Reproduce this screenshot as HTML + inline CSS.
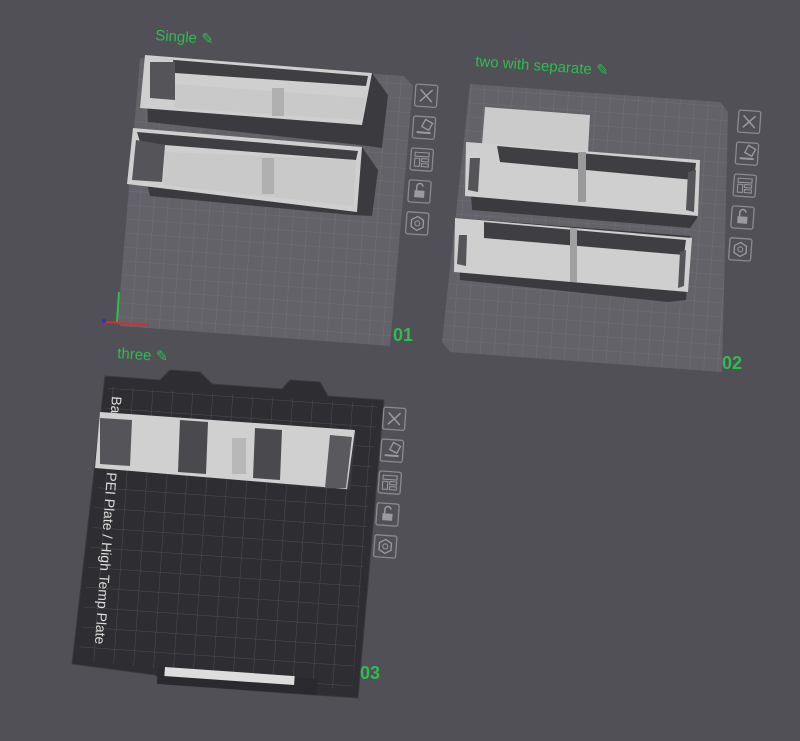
<!DOCTYPE html>
<html><head><meta charset="utf-8"><style>
html,body{margin:0;padding:0;background:#505056;width:800px;height:741px;overflow:hidden}
svg{display:block}
text{font-family:"Liberation Sans",sans-serif}
</style></head><body>
<svg width="800" height="741" viewBox="0 0 800 741" xmlns="http://www.w3.org/2000/svg">
<defs>
<pattern id="g1" width="14" height="14" patternUnits="userSpaceOnUse" patternTransform="rotate(4)">
<path d="M14 0V14M0 14H14" stroke="#737379" stroke-width="0.8" fill="none"/></pattern>
<pattern id="g3" width="20" height="20" patternUnits="userSpaceOnUse" patternTransform="rotate(4)">
<path d="M20 0V20M0 20H20" stroke="#4c4c52" stroke-width="1" fill="none"/></pattern>
<g id="icons">
<rect x="0" y="0" width="22" height="22" rx="2" fill="none" stroke="#8a8a90" stroke-width="1.3"/>
<path d="M5 5L17 17M17 5L5 17" stroke="#9a9aa0" stroke-width="1.5"/>
<rect x="0" y="32" width="22" height="22" rx="2" fill="none" stroke="#8a8a90" stroke-width="1.3"/>
<rect x="10" y="36" width="8" height="8" transform="rotate(25 14 40)" fill="none" stroke="#9a9aa0" stroke-width="1.3"/>
<path d="M4 48H18" stroke="#9a9aa0" stroke-width="2"/>
<rect x="0" y="64" width="22" height="22" rx="2" fill="none" stroke="#8a8a90" stroke-width="1.3"/>
<rect x="4" y="68" width="14" height="4" fill="none" stroke="#9a9aa0"/><rect x="4" y="74" width="5" height="8" fill="none" stroke="#9a9aa0"/><rect x="11" y="74" width="7" height="3" fill="none" stroke="#9a9aa0"/><rect x="11" y="79" width="7" height="3" fill="none" stroke="#9a9aa0"/>
<rect x="0" y="96" width="22" height="22" rx="2" fill="none" stroke="#8a8a90" stroke-width="1.3"/>
<path d="M8 106V102a3 3 0 0 1 6 0" fill="none" stroke="#9a9aa0" stroke-width="1.5"/><rect x="6" y="106" width="10" height="7" fill="#9a9aa0"/>
<rect x="0" y="128" width="22" height="22" rx="2" fill="none" stroke="#8a8a90" stroke-width="1.3"/>
<polygon points="11,132 17,135.5 17,142.5 11,146 5,142.5 5,135.5" fill="none" stroke="#9a9aa0" stroke-width="1.3"/><circle cx="11" cy="139" r="2.5" fill="none" stroke="#9a9aa0"/>
</g>
</defs>

<!-- plate 1 -->
<polygon points="140,58 404,76 413,86 390,346 120,326 118,318" fill="#626268"/>
<polygon points="140,58 404,76 413,86 390,346 120,326 118,318" fill="url(#g1)"/>
<!-- plate 2 -->
<polygon points="470,84 720,102 728,112 722,372 450,352 442,342" fill="#626268"/>
<polygon points="470,84 720,102 728,112 722,372 450,352 442,342" fill="url(#g1)"/>
<!-- plate 3 -->
<polygon points="105,376 160,380 170,370 200,372 212,384 282,389 290,380 320,382 328,396 384,400 358,698 300,694 165,684 155,675 72,664" fill="#2e2e32" stroke="#3a3a3f"/>
<polygon points="108,386 378,404 352,690 78,660" fill="url(#g3)"/>
<rect x="158" y="668" width="160" height="16" fill="#2a2a2e" transform="rotate(4 160 668)"/>
<rect x="165" y="667" width="130" height="9" fill="#ddd" transform="rotate(4 165 667)"/>
<text x="0" y="0" fill="#ddd" font-size="14" transform="translate(112,396) rotate(94)">Bam</text>
<text x="0" y="0" fill="#ddd" font-size="14" transform="translate(107,472) rotate(94)">PEI Plate / High Temp Plate</text>

<!-- plate1 box 1 -->
<polygon points="145,55 372,73 388,95 382,148 360,145 148,122" fill="#3b3b3f"/>
<polygon points="145,55 372,73 362,125 140,108" fill="#cfcfcf"/>
<polygon points="150,58 368,76 366,86 175,73 173,60" fill="#3f3f43"/>
<polygon points="150,62 175,62 175,100 150,98" fill="#555559"/>
<polygon points="175,84 366,98 362,120 175,108" fill="#c9c9c9"/>
<rect x="272" y="88" width="12" height="28" fill="#b0b0b0"/>
<!-- plate1 box 2 -->
<polygon points="133,128 362,147 378,170 372,216 352,215 150,196" fill="#3b3b3f"/>
<polygon points="133,128 362,147 357,212 127,184" fill="#cfcfcf"/>
<polygon points="137,132 358,151 356,160 165,145 140,142" fill="#3f3f43"/>
<polygon points="136,140 165,145 162,182 132,180" fill="#555559"/>
<polygon points="165,152 356,160 353,206 163,185" fill="#c9c9c9"/>
<rect x="262" y="158" width="12" height="36" fill="#b0b0b0"/>

<!-- plate2 upper box -->
<polygon points="485,107 590,115 588,152 482,145" fill="#cbcbcb"/>
<polygon points="468,145 700,160 697,218 690,228 472,210" fill="#3b3b3f"/>
<polygon points="466,142 700,160 698,216 465,196" fill="#cfcfcf"/>
<polygon points="497,146 696,163 694,180 500,162" fill="#3f3f43"/>
<polygon points="470,158 480,158 478,192 468,190" fill="#555559"/>
<rect x="578" y="152" width="8" height="50" fill="#9a9a9a"/>
<polygon points="688,172 696,170 694,212 686,210" fill="#555559"/>
<!-- plate2 lower box -->
<polygon points="458,218 690,236 686,300 668,302 460,280" fill="#3b3b3f"/>
<polygon points="455,218 692,238 688,292 454,272" fill="#cfcfcf"/>
<polygon points="484,222 686,240 684,255 484,238" fill="#3f3f43"/>
<polygon points="459,235 467,235 466,266 457,264" fill="#555559"/>
<rect x="570" y="228" width="7" height="54" fill="#a0a0a0"/>
<polygon points="680,252 686,250 684,286 678,288" fill="#555559"/>

<!-- plate3 box -->
<polygon points="100,412 356,432 350,490 330,489 96,466" fill="#3b3b3f"/>
<polygon points="100,412 355,430 347,489 95,468" fill="#d0d0d0"/>
<polygon points="100,418 132,420 130,466 100,464" fill="#555559"/>
<polygon points="180,420 208,422 206,474 178,472" fill="#4a4a4e"/>
<polygon points="255,428 282,430 280,480 253,478" fill="#4a4a4e"/>
<rect x="232" y="438" width="14" height="36" fill="#b8b8b8"/>
<polygon points="330,435 352,437 346,488 325,488" fill="#5a5a5e"/>

<!-- axes -->
<path d="M105 322L148 325" stroke="#d03030" stroke-width="2"/>
<path d="M117 322L119 292" stroke="#30c040" stroke-width="2"/>
<circle cx="104" cy="321" r="2" fill="#3030c0"/>

<!-- icons -->
<use href="#icons" transform="translate(416,84) rotate(4)"/>
<use href="#icons" transform="translate(739,110) rotate(4)"/>
<use href="#icons" transform="translate(384,407) rotate(4)"/>

<!-- labels -->
<g fill="#2ebd4f" font-weight="bold">
<text x="155" y="40" font-size="15" font-weight="normal" transform="rotate(4 155 40)">Single ✎</text>
<text x="475" y="66" font-size="15" font-weight="normal" transform="rotate(4 475 66)">two with separate ✎</text>
<text x="117" y="358" font-size="15" font-weight="normal" transform="rotate(4 117 358)">three ✎</text>
<text x="393" y="341" font-size="18">01</text>
<text x="722" y="369" font-size="18">02</text>
<text x="360" y="679" font-size="18">03</text>
</g>
</svg>
</body></html>
